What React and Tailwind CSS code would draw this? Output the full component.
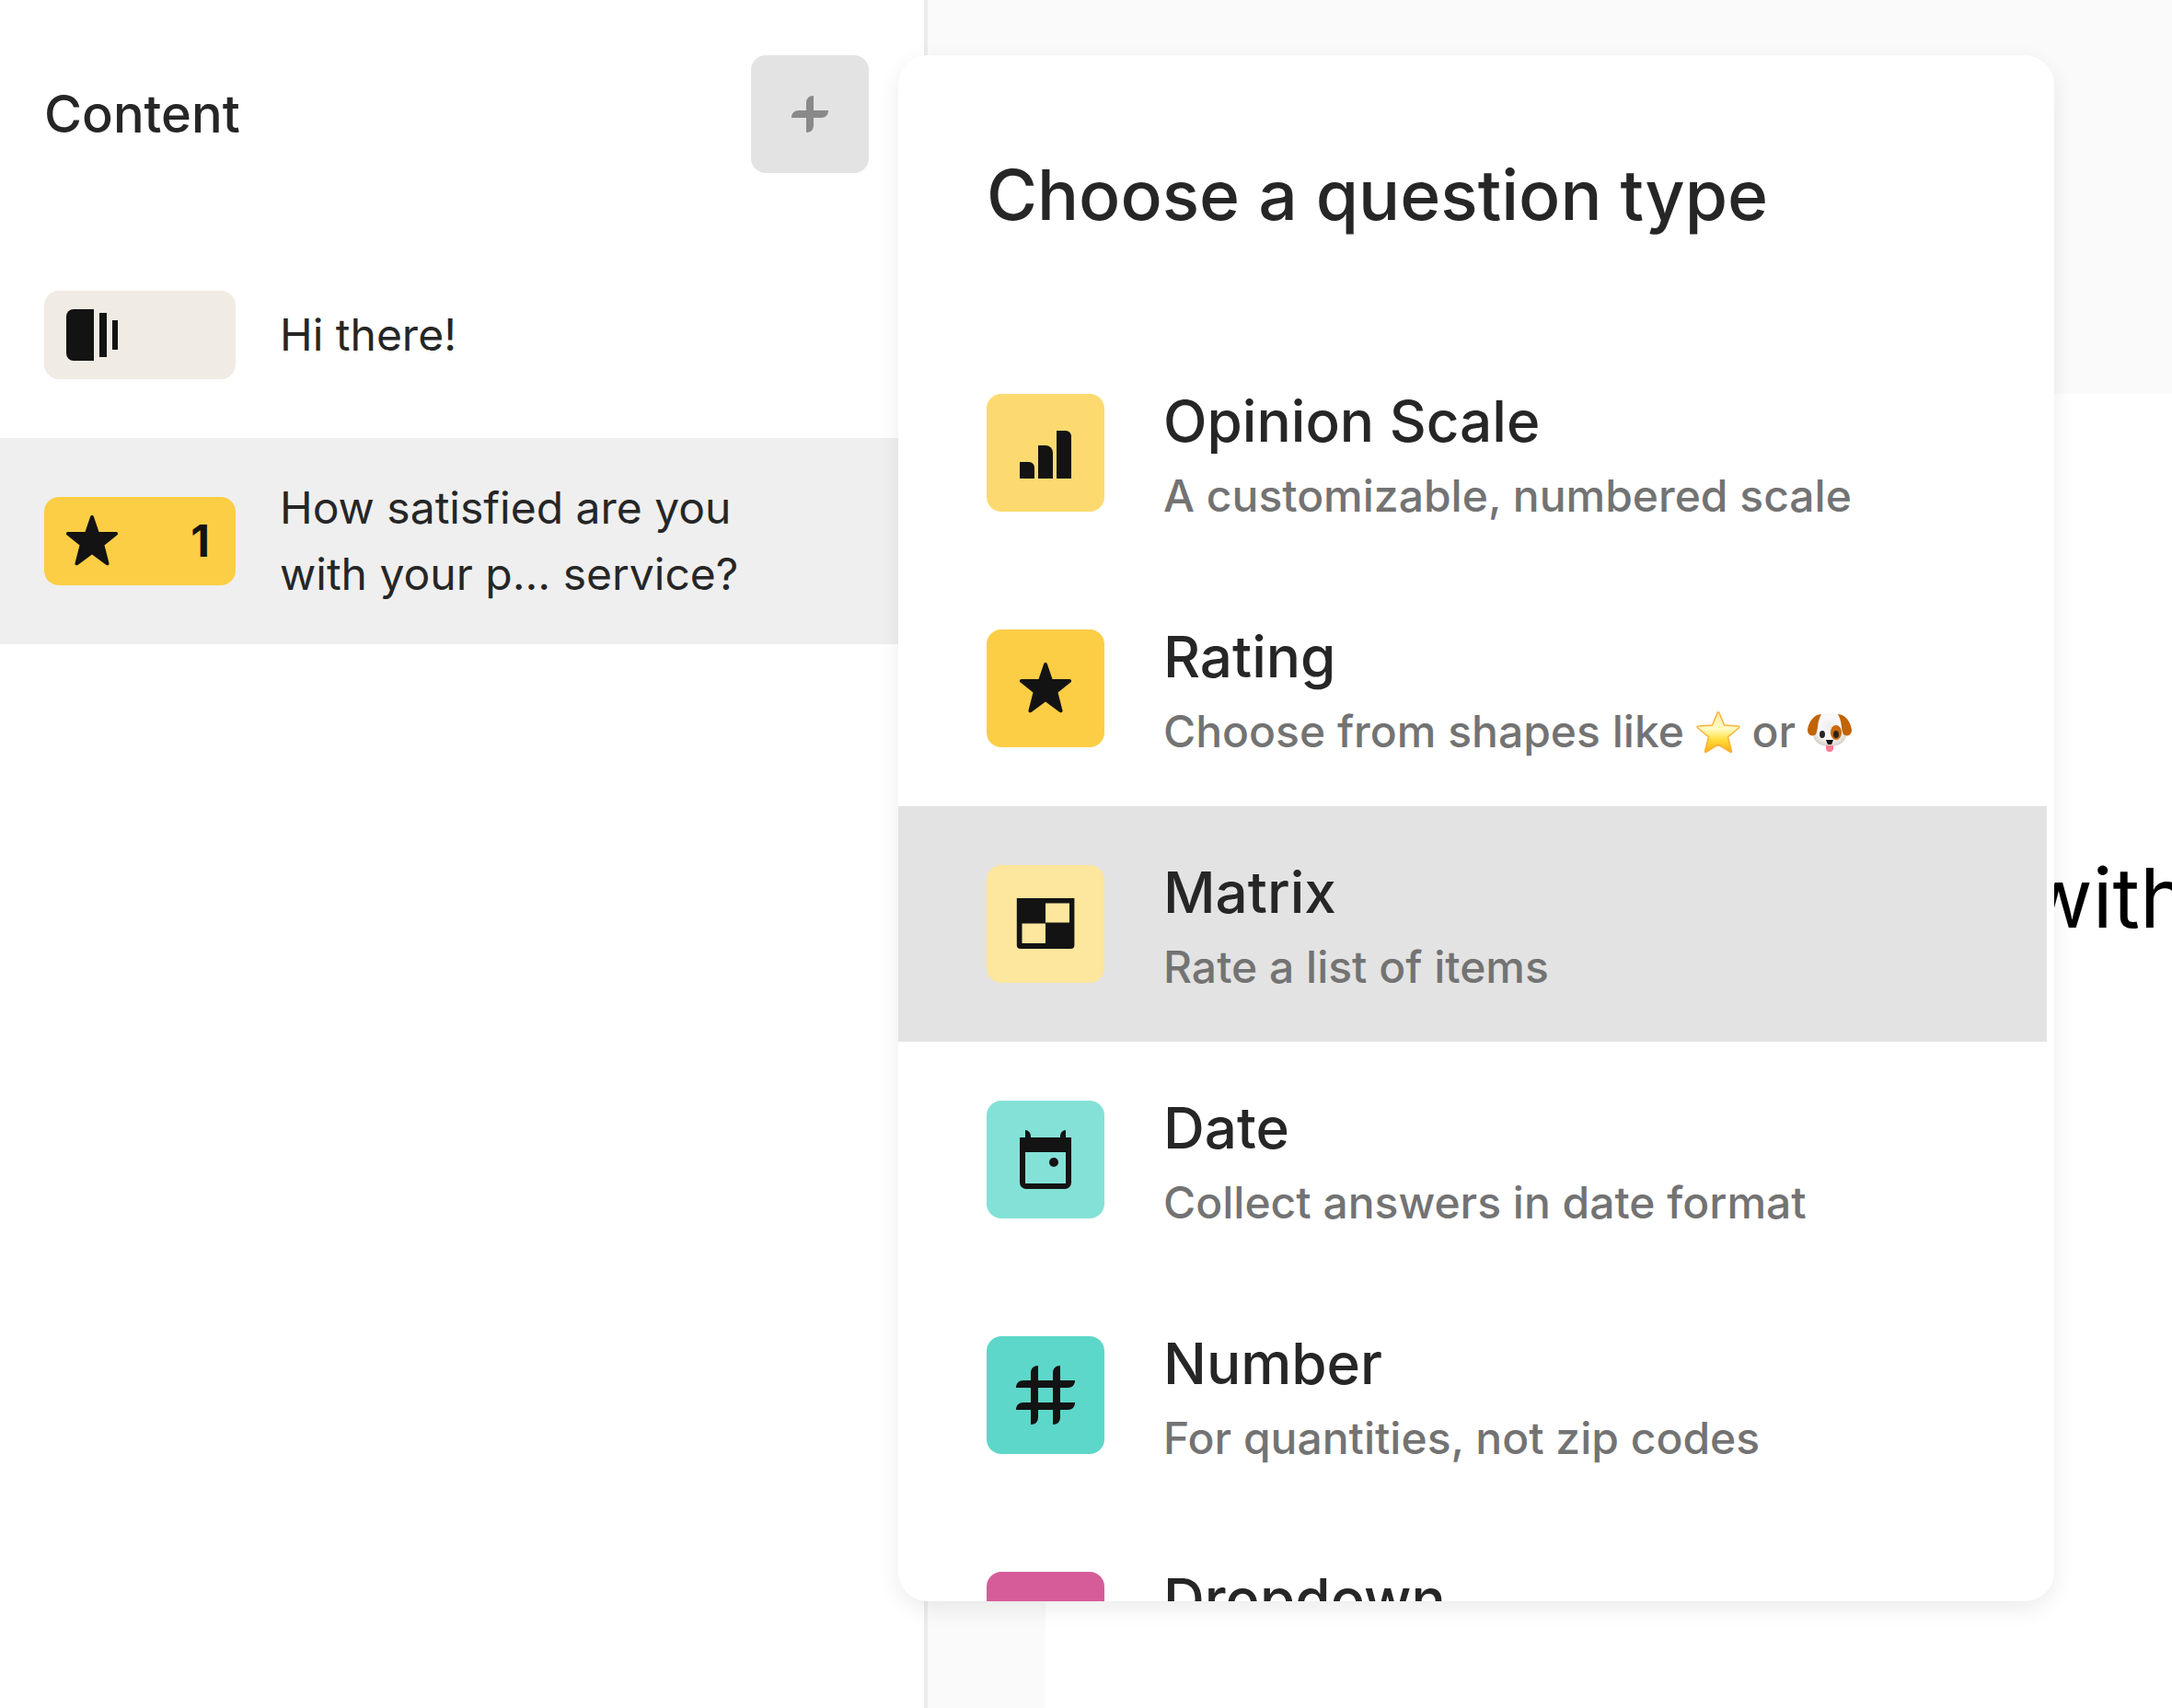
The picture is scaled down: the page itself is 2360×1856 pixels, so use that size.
const INK = '#131313';

const WelcomeIcon = () => (
    <svg width="64" height="64" viewBox="0 0 64 64" fill={INK} aria-hidden="true">
        <path d="M12 4h22v56H12a8 8 0 0 1-8-8V12a8 8 0 0 1 8-8z" />
        <path d="M40 8h8v48h-8zM54 16h6v32h-6z" />
    </svg>
);

const StarIcon = () => (
    <svg width="64" height="64" viewBox="0 0 64 64" fill={INK} aria-hidden="true">
        <path d="M30.2 5.2c.6-1.6 3-1.6 3.6 0L39.500 22H58c2.200 0 2.800 2.400 1.200 3.600L45.500 36.400l5 19.600c.4 1.800-1.400 3-3 2L32 46.500 16.500 58c-1.600 1-3.400-.2-3-2l5-19.600L4.800 25.600C3.200 24.400 3.800 22 6 22h18.500z" />
    </svg>
);

const ScaleIcon = () => (
    <svg width="64" height="64" viewBox="0 0 64 64" fill={INK} aria-hidden="true">
        <path d="M4 42h10a6 6 0 0 1 6 6v12H4z" />
        <path d="M24 24h8a8 8 0 0 1 8 8v28H24z" />
        <path d="M44 8h10a6 6 0 0 1 6 6v46H44z" />
    </svg>
);

const MatrixIcon = () => (
    <svg width="64" height="64" viewBox="0 0 64 64" aria-hidden="true">
        <path fill={INK} fillRule="evenodd" d="M.8 4h62.600v51a4 4 0 0 1-4 4H4.800a4 4 0 0 1-4-4zM32 9.500v21h26v-21zM6.500 31.500v21.500H32V31.500z" />
    </svg>
);

const DateIcon = () => (
    <svg width="64" height="64" viewBox="0 0 64 64" fill={INK} aria-hidden="true">
        <path fillRule="evenodd" d="M4 8h6V0c3.500 0 6 3 6 7v1h32V7c0-4 2.500-7 6-7v8h6v49a7 7 0 0 1-7 7H11a7 7 0 0 1-7-7zM10 24v34h44V24z" />
        <circle cx="41" cy="35" r="5" />
    </svg>
);

const NumberIcon = () => (
    <svg width="64" height="64" viewBox="0 0 64 64" fill={INK} aria-hidden="true">
        <path fillRule="evenodd" d="M16 8c0-5 3-8 8-8v16h16V8c0-5 3-8 8-8v16h16c0 5-3 8-8 8h-8v16h16c0 5-3 8-8 8h-8v8c0 5-3 8-8 8V48H24v8c0 5-3 8-8 8V48H0c0-5 3-8 8-8h8V24H0c0-5 3-8 8-8h8zM24 24v16h16V24z" />
    </svg>
);

const PlusIcon = () => (
    <svg width="40" height="40" viewBox="0 0 40 40" fill="#898989" aria-hidden="true">
        <path d="M16 8c0-5 3-8 8-8v16h16c0 5-3 8-8 8h-8v8c0 5-3 8-8 8V24H0c0-5 3-8 8-8h8z" />
    </svg>
);

const StarEmoji = () => (
    <svg className="-mt-2 inline-block align-middle" width="48" height="48" viewBox="0 0 48 48" role="img" aria-label="star">
        <defs>
            <linearGradient id="star-fill" x1="0" y1="0" x2="0" y2="1">
                <stop offset="0" stopColor="#ffe9a0" />
                <stop offset="0.42" stopColor="#fffbc4" />
                <stop offset="0.68" stopColor="#ffdf3e" />
                <stop offset="1" stopColor="#ffab10" />
            </linearGradient>
        </defs>
        <path fill="url(#star-fill)" stroke="#f8b33c" strokeWidth="1.500" strokeLinejoin="round" d="M23 3.500c.5-1 1.500-1 2 0L30.500 17l15 1c1.500.2 1.800 1.200.8 2L34.500 30l4 15c.2 1.300-.7 1.800-1.700 1.200L24 38 11.200 46.200c-1 .6-1.900.1-1.700-1.200l4-15L1.700 20c-1-.8-.7-1.800.8-2l15-1z" />
    </svg>
);

const DogEmoji = () => (
    <svg className="-mt-2 inline-block align-middle" width="48" height="48" viewBox="0 0 48 48" role="img" aria-label="dog">
        <defs>
            <radialGradient id="dog-face" cx="0.5" cy="0.4" r="0.6">
                <stop offset="0" stopColor="#ececec" />
                <stop offset="0.6" stopColor="#fbfbfb" />
                <stop offset="1" stopColor="#d8d1ca" />
            </radialGradient>
        </defs>
        <path fill="url(#dog-face)" d="M15 6c5-2 13-2 18 0 5 4 7 12 9 20 0 9-7 14-18 14S6 35 6 26c2-8 4-16 9-20z" />
        <path fill="#c06405" d="M15 5C7 5 1 14 0 22c0 6 5 8 9 5 3-6 1-13 6-22zM33 5c8 0 14 9 15 17 0 6-5 8-9 5-3-6-1-13-6-22z" />
        <ellipse cx="31" cy="25" rx="6" ry="8" fill="#c96a08" />
        <ellipse cx="16" cy="27" rx="3" ry="4" fill="#2a2422" />
        <ellipse cx="31" cy="27" rx="3" ry="4" fill="#2a2422" />
        <path fill="#111" d="M20 33h8l-2 5h-4z" />
        <path fill="#ff7d93" d="M20 39h8v3a4 4 0 0 1-8 0z" />
    </svg>
);

const questions = [
    { id: 1, title: 'Hi there!', color: 'bg-[#f0ebe3]', icon: <WelcomeIcon /> },
    { id: 2, title: 'How satisfied are you with your p... service?', color: 'bg-[#fbce45]', icon: <StarIcon />, number: 1, selected: true },
];

const questionTypes = [
    { name: 'Opinion Scale', description: 'A customizable, numbered scale', color: 'bg-[#fcda70]', icon: <ScaleIcon /> },
    { name: 'Rating', description: <>Choose from shapes like <StarEmoji /> or <DogEmoji /></>, color: 'bg-[#fbce45]', icon: <StarIcon /> },
    { name: 'Matrix', description: 'Rate a list of items', color: 'bg-[#fde69d]', icon: <MatrixIcon />, active: true },
    { name: 'Date', description: 'Collect answers in date format', color: 'bg-[#84e1d7]', icon: <DateIcon /> },
    { name: 'Number', description: 'For quantities, not zip codes', color: 'bg-[#5dd7c9]', icon: <NumberIcon /> },
    { name: 'Dropdown', color: 'bg-[#d65c99]' },
];

const Sidebar = () => (
    <aside className="w-[1008px] shrink-0 border-r-4 border-[#ececec] bg-white">
        <div className="flex items-center justify-between pt-[60px] pb-16 pl-12 pr-[60px]">
            <h2 className="text-[56px] leading-[72px] font-medium">Content</h2>
            <button aria-label="Add question" className="flex size-32 items-center justify-center rounded-2xl bg-[#e3e3e3]">
                <PlusIcon />
            </button>
        </div>
        <ul>
            {questions.map((q) => (
                <li key={q.id}>
                    <button className={`flex w-full items-center gap-12 px-12 text-left ${q.selected ? 'bg-[#efefef] py-10' : 'py-16'}`}>
                        <span className={`flex h-24 w-52 shrink-0 items-center justify-between rounded-2xl pl-5 pr-7 ${q.color}`}>
                            {q.icon}
                            {q.number && <span className="text-[48px] leading-none font-bold text-[#131313]">{q.number}</span>}
                        </span>
                        <span className="max-w-[540px] text-[48px] leading-[72px]">{q.title}</span>
                    </button>
                </li>
            ))}
        </ul>
    </aside>
);

const TypeMenu = () => (
    <div role="dialog" aria-labelledby="menu-title" className="absolute top-[60px] left-[976px] h-[1680px] w-[1256px] overflow-hidden rounded-[32px] bg-white shadow-[0_8px_24px_rgba(0,0,0,0.08)]">
        <h1 id="menu-title" className="p-24 text-[75px] leading-[112px] font-medium">Choose a question type</h1>
        <ul className="pr-2">
            {questionTypes.map((type) => (
                <li key={type.name}>
                    <button className={`flex h-64 w-full items-start gap-16 px-24 text-left ${type.active ? 'bg-[#e3e3e3]' : ''}`}>
                        <span className={`mt-16 flex size-32 shrink-0 items-center justify-center rounded-2xl ${type.color}`}>{type.icon}</span>
                        <span className="mt-[50px] flex flex-col whitespace-nowrap">
                            <span className="text-[62px] leading-[88px] font-medium">{type.name}</span>
                            {type.description && (
                                <span className="text-[48px] leading-[74px] font-medium text-[#737373]">{type.description}</span>
                            )}
                        </span>
                    </button>
                </li>
            ))}
        </ul>
    </div>
);

export default function App() {
    return (
        <div className="relative flex min-h-screen overflow-hidden bg-[#fafafa] font-['Inter',sans-serif] text-[#262626]">
            <Sidebar />
            <main className="flex min-w-0 grow flex-col pt-[428px] pl-32">
                <div className="grow overflow-hidden bg-white pt-[480px] pl-[1064px]">
                    <p className="text-[90px] leading-[136px] whitespace-nowrap text-black">with</p>
                </div>
            </main>
            <TypeMenu />
        </div>
    );
}
